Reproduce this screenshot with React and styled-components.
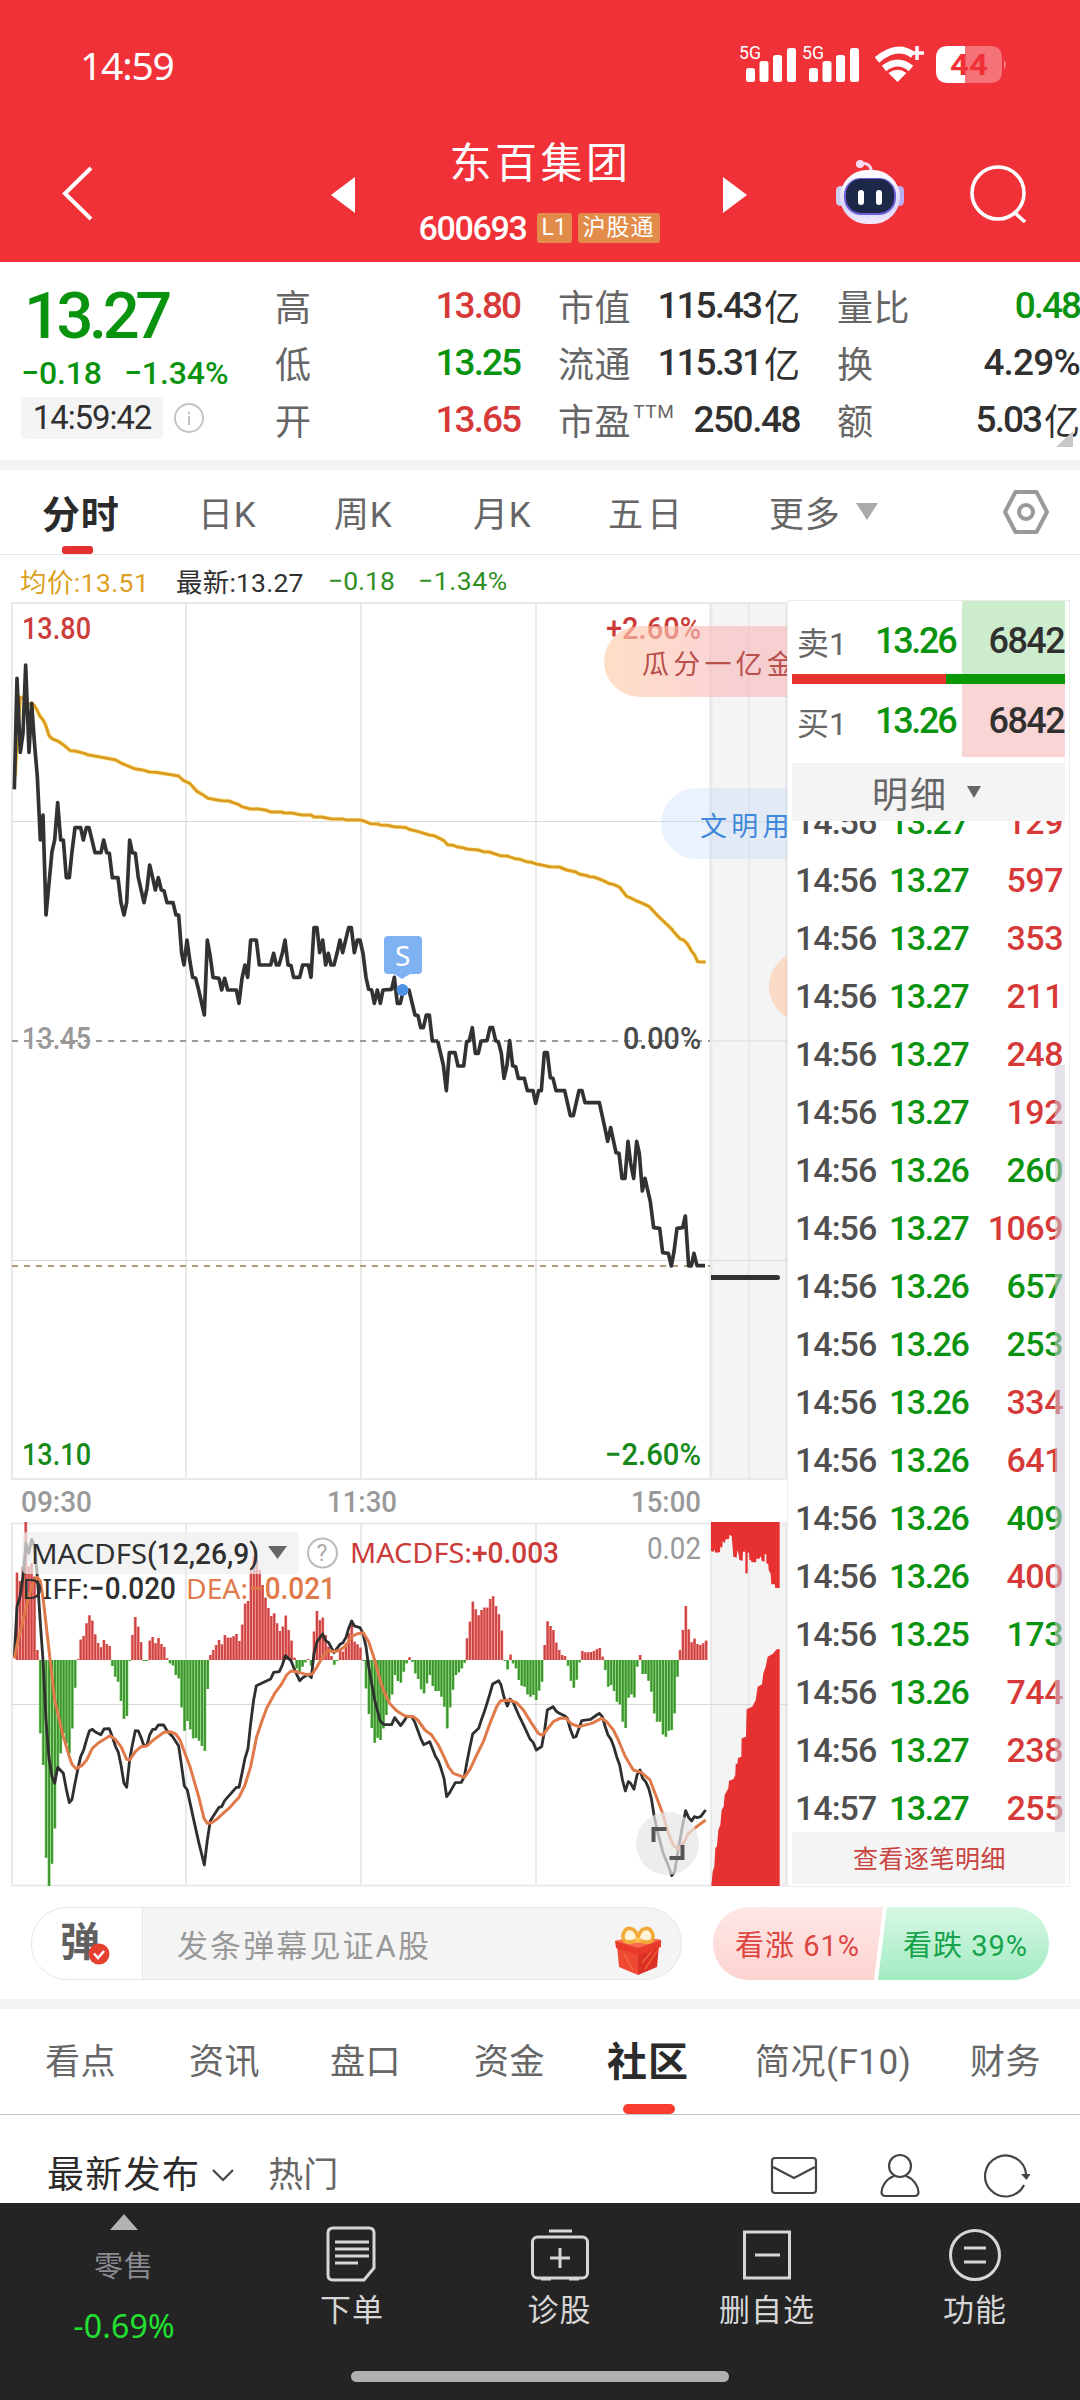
import React from 'react'
import styled, { createGlobalStyle } from 'styled-components'

const RED = '#d63a38'
const GREEN = '#0a930f'
const DARK = '#303030'
const GREY = '#666'

const trades = [
    ['14:56', '13.27', '129', RED],
    ['14:56', '13.27', '597', RED],
    ['14:56', '13.27', '353', RED],
    ['14:56', '13.27', '211', RED],
    ['14:56', '13.27', '248', RED],
    ['14:56', '13.27', '192', RED],
    ['14:56', '13.26', '260', GREEN],
    ['14:56', '13.27', '1069', RED],
    ['14:56', '13.26', '657', GREEN],
    ['14:56', '13.26', '253', GREEN],
    ['14:56', '13.26', '334', RED],
    ['14:56', '13.26', '641', RED],
    ['14:56', '13.26', '409', GREEN],
    ['14:56', '13.26', '400', RED],
    ['14:56', '13.25', '173', GREEN],
    ['14:56', '13.26', '744', RED],
    ['14:56', '13.27', '238', RED],
    ['14:57', '13.27', '255', RED],
]

// chart series are stored at three units per pixel
const priceMorning = '43,598 51,265 61,487 69,430 77,225 87,487 95,340 103,455 112,560 121,750 129,675 138,975 147,880 156,785 164,750 173,638 182,750 190,750 199,863 208,863 216,785 225,713 242,713 250,750 259,713 267,713 276,750 285,788 303,788 311,750 320,788 328,790 337,863 354,863 363,938 372,975 380,938 389,750 397,788 406,790 415,863 432,938 441,895 449,825 458,863 466,900 475,863 484,900 492,902 501,938 519,938 528,975 536,975 545,1090 552,1125 561,1050 570,1115 578,1162 587,1165 596,1200 613,1275 622,1050 631,1100 639,1162 657,1165 665,1200 674,1165 683,1200 709,1200 717,1240 726,1165 735,1125 743,1162 752,1050 769,1050 778,1125 812,1125 821,1090 829,1125 837,1125 847,1090 855,1050 864,1125 873,1127 881,1162 899,1162 908,1125 925,1125 933,1162 942,1013 951,1013 959,1088 968,1050 977,1125 985,1090 993,1125 1002,1125 1011,1090 1020,1050 1028,1088 1037,1050 1046,1013 1054,1013 1063,1088 1072,1050 1080,1050 1089,1090 1098,1162 1106,1198 1115,1200 1123,1240 1132,1200 1141,1240 1149,1200 1175,1198 1183,1162 1192,1240 1201,1240 1210,1200 1227,1200 1245,1275 1254,1277 1262,1313 1270,1313 1279,1275 1288,1275 1297,1353 1314,1353'
const priceAfternoon = '113,123 130,195 139,272 148,158 165,158 174,198 191,198 200,125 208,122 217,83 226,160 235,160 243,123 261,122 270,83 278,83 287,122 295,125 304,160 312,235 321,195 329,122 338,197 347,200 355,235 373,235 382,272 399,272 407,310 416,272 424,272 433,158 442,158 451,233 459,235 468,272 494,272 511,347 520,347 537,272 546,272 555,308 598,308 615,385 623,424 632,383 648,458 657,460 666,535 675,535 684,424 692,490 701,535 710,424 718,460 727,573 735,535 751,605 761,683 779,685 788,758 805,760 814,798 822,755 831,685 848,683 856,648 866,798 874,798 882,760 891,797 915,797'
const avgMorning = '45,560 52,440 61,322 70,325 80,340 90,342 97,341 103,347 112,362 120,379 130,391 138,408 147,437 156,446 175,454 192,466 211,482 225,483 253,490 262,494 345,509 363,519 380,526 403,536 432,541 449,546 468,547 536,558 550,571 569,580 592,605 605,612 624,625 665,632 686,633 715,643 726,650 751,657 777,657 800,661 812,666 845,666 852,669 875,669 905,675 933,675 942,681 965,681 995,687 1030,687 1036,690 1083,690'
const avgAfternoon = '3,690 32,701 55,702 60,705 82,706 105,711 120,711 139,713 147,718 165,722 182,727 208,735 222,737 252,752 262,764 280,766 290,770 308,773 320,777 355,780 370,785 388,786 420,797 442,798 465,806 480,808 500,815 515,817 533,823 570,830 598,831 620,840 645,845 660,853 682,857 688,860 702,861 730,872 748,881 760,883 778,891 800,919 815,925 830,933 848,940 868,950 892,976 935,1017 945,1030 960,1046 972,1051 984,1064 995,1084 1003,1094 1013,1115 1037,1116'
const diffMorning = '43,470 51,320 60,290 69,230 78,130 86,160 95,118 104,140 112,230 121,370 129,480 138,660 147,775 156,830 164,850 173,802 190,820 199,868 208,908 216,898 225,850 234,805 242,770 251,750 260,718 268,693 277,688 285,695 294,700 303,704 312,687 328,686 337,710 346,738 355,757 363,795 372,850 380,862 389,780 397,735 406,692 415,693 423,712 432,738 441,735 449,705 458,688 466,688 475,675 491,675 501,692 518,710 536,738 545,800 553,858 562,870 570,908 579,950 597,1030 613,1095 622,1020 631,962 657,922 665,920 674,902 709,862 717,862 726,820 735,775 744,745 752,670 761,600 769,557 812,537 821,517 838,515 847,495 856,467 873,482 882,505 899,542 908,533 925,523 934,533 942,460 951,425 968,402 977,422 986,428 1002,458 1011,445 1020,433 1029,428 1038,412 1046,385 1055,363 1063,378 1080,383 1089,400 1098,440 1106,500 1124,600 1141,665'
const diffAfternoon = '0,663 12,674 35,674 44,653 62,677 71,665 80,650 95,650 105,668 113,690 122,715 131,734 149,725 157,745 166,768 175,783 183,805 192,835 200,890 209,878 226,848 244,847 253,830 261,785 269,745 278,702 296,685 304,660 313,635 321,610 330,580 338,552 356,542 363,555 373,595 382,618 390,597 400,608 416,645 433,680 450,717 460,728 469,750 485,740 494,690 502,630 519,620 528,633 538,640 555,648 562,655 571,688 580,712 588,710 605,662 632,658 650,645 658,640 667,650 675,678 684,705 693,718 702,742 710,770 719,795 727,838 736,873 745,845 752,850 762,868 771,825 780,810 788,835 797,845 806,865 814,895 822,945 830,985 848,1055 866,1100 875,1127 884,1115 893,1060 908,975 917,932 926,953 935,963 943,950 952,953 962,950 977,930'
const deaMorning = '43,475 52,430 69,362 86,290 100,245 112,232 121,243 130,300 147,450 164,600 190,710 208,770 216,793 228,806 245,797 260,780 277,745 296,728 330,707 346,718 363,740 380,778 389,780 406,755 423,740 441,738 460,720 492,697 510,695 527,702 540,720 570,800 596,890 612,955 622,970 635,968 650,958 675,935 690,922 717,892 735,855 752,800 770,710 785,665 800,625 826,577 843,555 860,525 873,513 890,515 920,524 938,521 951,500 970,467 985,452 1005,455 1020,450 1037,438 1055,410 1070,402 1090,398 1106,425 1124,480 1141,543'
const deaAfternoon = '0,540 12,575 30,612 52,634 75,648 100,650 113,660 135,690 155,705 175,735 192,770 205,800 220,820 253,832 270,808 290,765 310,725 330,670 350,620 362,602 390,601 410,608 430,630 455,670 475,700 487,706 500,690 520,665 540,655 558,655 575,672 597,680 635,670 665,655 680,665 700,690 715,720 735,768 760,810 785,818 810,840 825,880 848,940 865,1000 880,1035 893,1047 910,1030 925,1000 950,980 977,960'

// histogram runs: first x, then the tip of every bar (axis is at 480)
const macdRuns = [
    [51, [218, 243, 200, 66, 200, 190, 230, 450]],
    [121, [700, 795, 1073, 1158, 1091, 985, 800, 760, 700, 730, 760, 685, 563, 477]],
    [242, [419, 408, 370, 346, 362, 403, 429, 442, 420, 432, 438]],
    [337, [498, 530, 545, 603, 657, 648, 483]],
    [397, [405, 351, 380, 426, 483, 483, 422, 411, 430, 414, 432, 441, 475]],
    [510, [490, 496, 525, 535, 622, 692, 663, 688, 715, 714, 722, 738, 752, 567]],
    [631, [465, 450, 435, 420, 433, 405, 413, 413, 409, 402, 423, 374, 311, 303, 215, 167, 180, 210, 255, 293, 324, 348, 340, 370, 393, 380, 347, 390, 422, 473]],
    [890, [505, 515, 500, 487, 477, 497]],
    [942, [395, 333, 361, 353, 405, 440, 468, 494, 483, 450, 455, 430, 400, 375, 425, 433, 443, 483]],
    [1098, [565, 642, 684, 728, 713, 720, 685, 645, 600, 583, 525, 543, 548, 515, 490, 472, 486]],
    [1246, [520, 537, 568, 580, 550, 525, 558, 573, 573, 590, 620, 685, 622, 569, 525, 517, 505, 488]],
    [1401, [415, 365, 305, 328, 346, 330, 323, 323, 297, 289, 318, 343, 392, 483, 508, 464]],
    [1539, [490, 505, 540, 557, 560, 583, 590, 585, 600, 572, 545]],
    [1634, [435, 364, 378, 390, 428, 450, 465, 468]],
    [1704, [497, 542, 563, 539, 487]],
    [1747, [453, 457, 457, 456, 453, 448, 444, 470]],
    [1816, [510, 560, 555, 573, 605, 613, 665, 684, 593, 583, 592, 500, 465]],
    [1928, [522, 522, 542, 575, 640, 665, 665, 703, 710, 692, 690, 640, 530]],
    [2040, [450, 390, 318, 388, 427, 416, 432, 435, 430, 422]],
]
const bars = macdRuns.flatMap(([x, tips]) => tips.map((tip, i) => ({ x: x + i * 8.7, tip })))

const depthTop = '993,66 1199,66 1199,265 1185,263 1185,253 1174,253 1172,222 1166,210 1165,193 1159,190 1159,163 1154,163 1154,185 1145,183 1143,168 1137,178 1130,175 1128,187 1115,187 1112,180 1108,180 1107,158 1103,158 1103,220 1096,220 1096,155 1089,155 1088,182 1078,180 1076,163 1072,150 1070,173 1060,170 1058,145 1055,108 1049,104 1047,117 1037,118 1034,130 1028,122 1027,143 1021,140 1020,157 1006,158 1003,148 1000,156 993,153'
const depthBottom = '994,1158 998,1115 1003,1100 1006,1045 1011,1038 1015,990 1021,975 1025,930 1031,920 1034,885 1045,865 1047,842 1060,838 1066,825 1067,793 1073,790 1074,774 1084,770 1085,715 1098,710 1100,628 1117,620 1127,600 1133,560 1146,553 1150,520 1157,500 1163,470 1178,462 1190,448 1199,447 1199,1158'

export default function App() {
    return (
        <Page>
            <GlobalStyle />
            <Header>
                <StatusBar>
                    <Clock>14:59</Clock>
                    <StatusIcons />
                </StatusBar>
                <TitleBar>
                    <BackIcon />
                    <PrevArrow width="24" height="36" viewBox="0 0 24 36"><path d="M0 18 24 0v36z" fill="#fff" /></PrevArrow>
                    <TitleBlock>
                        <StockName>东百集团</StockName>
                        <CodeRow>
                            <StockCode>600693</StockCode>
                            <Badge width={35}>L1</Badge>
                            <Badge width={82} ls={1}>沪股通</Badge>
                        </CodeRow>
                    </TitleBlock>
                    <NextArrow width="24" height="36" viewBox="0 0 24 36"><path d="M24 18 0 0v36z" fill="#fff" /></NextArrow>
                    <Robot />
                    <SearchIcon />
                </TitleBar>
            </Header>

            <Quote>
                <QuoteMain>
                    <BigPrice>13.27</BigPrice>
                    <ChangeRow><span>−0.18</span><span>−1.34%</span></ChangeRow>
                    <TimeRow>
                        <TimeBox>14:59:42</TimeBox>
                        <svg width="32" height="32" viewBox="0 0 32 32" fill="none" stroke="#c4c4c4" strokeWidth="2">
                            <circle cx="16" cy="16" r="14" /><path d="M16 14v9M16 9.5v2.5" />
                        </svg>
                    </TimeRow>
                </QuoteMain>
                <StatColumn width={245} gap={38}>
                    <Stat><label>高</label><Num color={RED}>13.80</Num></Stat>
                    <Stat><label>低</label><Num color={GREEN}>13.25</Num></Stat>
                    <Stat><label>开</label><Num color={RED}>13.65</Num></Stat>
                </StatColumn>
                <StatColumn width={242} gap={37}>
                    <Stat><label>市值</label><Num>115.43<Unit>亿</Unit></Num></Stat>
                    <Stat><label>流通</label><Num>115.31<Unit>亿</Unit></Num></Stat>
                    <Stat><label>市盈<Sup>TTM</Sup></label><Num ls={-1.5}>250.48</Num></Stat>
                </StatColumn>
                <StatColumn width={243} gap={0}>
                    <Stat><label>量比</label><Num color={GREEN}>0.48</Num></Stat>
                    <Stat><label>换</label><Num ls={-0.8}>4.29%</Num></Stat>
                    <Stat><label>额</label><Num>5.03<Unit>亿</Unit></Num></Stat>
                </StatColumn>
                <Corner />
            </Quote>

            <PeriodTabs>
                <Period active>分时</Period>
                <Period>日K</Period>
                <Period>周K</Period>
                <Period>月K</Period>
                <Period ls={4}>五日</Period>
                <Period>更多<Caret size={11} h={17} color="#aaa" ml={15} /></Period>
                <svg width="46" height="46" viewBox="0 0 46 46" fill="none" stroke="#999" strokeWidth="4" strokeLinejoin="round">
                    <path d="M12.5 3h21L44 23 33.500 43h-21L2 23z" /><circle cx="23" cy="23" r="7" />
                </svg>
            </PeriodTabs>

            <Legend>
                <LegendItem width={156} ls={0.4} color="#dd9f22">均价:13.51</LegendItem>
                <LegendItem width={152} ls={0.2} color={DARK}>最新:13.27</LegendItem>
                <LegendItem width={90} color="#2f8f22">−0.18</LegendItem>
                <LegendItem ls={0.6} color="#2f8f22">−1.34%</LegendItem>
            </Legend>

            <ChartArea>
                <Charts>
                    <PriceChart />
                    <MacdChart />
                    <Barrage top={26} left={604} bg="linear-gradient(90deg, rgba(255,205,170,.65), rgba(248,185,188,.62) 130px)" color="#b9504c" pad={38}>瓜分一亿金</Barrage>
                    <Barrage top={188} left={661} bg="rgba(190,215,250,.32)" color="#4088dc" pad={39}>文明用</Barrage>
                    <Barrage top={351} left={769} bg="rgba(255,198,158,.55)" pad={60} />
                </Charts>
                <Book>
                    <Level bg="#cdebcd" shift={7}><label>卖1</label><b>13.26</b><em>6842</em></Level>
                    <RatioBar><i /></RatioBar>
                    <Level bg="#f9d5d5" shift={0}><label>买1</label><b>13.26</b><em>6842</em></Level>
                    <BookTitle>明细<Caret size={7.500} h={12} color="#666" ml={19} /></BookTitle>
                    <TradeList>
                        <TradeRows>
                            {trades.map(([time, price, vol, color], i) => (
                                <Trade key={i} color={color}><span>{time}</span><b>{price}</b><em>{vol}</em></Trade>
                            ))}
                        </TradeRows>
                        <Thumb />
                    </TradeList>
                    <BookMore>查看逐笔明细</BookMore>
                </Book>
            </ChartArea>

            <CommentBar>
                <CommentInput>
                    <BarrageToggle>
                        弹
                        <Check width="22" height="22" viewBox="0 0 22 22">
                            <circle cx="11" cy="11" r="10.500" fill="#e5402f" />
                            <path d="M6 10.500l4 4.500 6-7" fill="none" stroke="#fff" strokeWidth="2.500" />
                        </Check>
                    </BarrageToggle>
                    <Placeholder>发条弹幕见证A股</Placeholder>
                    <Gift />
                </CommentInput>
                <Votes>
                    <VoteUp>看涨 61%</VoteUp>
                    <VoteDown>看跌 39%</VoteDown>
                </Votes>
            </CommentBar>

            <SectionTabs>
                <Section>看点</Section>
                <Section>资讯</Section>
                <Section>盘口</Section>
                <Section>资金</Section>
                <Section active>社区</Section>
                <Section>简况(F10)</Section>
                <Section>财务</Section>
            </SectionTabs>

            <FeedBar>
                <FeedSort>最新发布</FeedSort>
                <svg width="22" height="13" viewBox="0 0 22 13" fill="none" stroke="#444" strokeWidth="2.200"><path d="M1 1l10 10L21 1" /></svg>
                <FeedHot>热门</FeedHot>
                <FeedIcons>
                    <svg width="46" height="44" viewBox="0 0 46 44"><rect x="1" y="4" width="44" height="35" rx="3" /><path d="M2 13l21 11 21-11" /></svg>
                    <svg width="46" height="44" viewBox="0 0 46 44"><circle cx="23" cy="12" r="11" /><path d="M17 22C9 25 5 32 4.500 38q0 4 4 4h29q4 0 4-4C41 32 37 25 29 22" /></svg>
                    <svg width="46" height="44" viewBox="0 0 46 44"><path d="M41 31A20.500 20.500 0 1 1 43 20" /><path d="M38 20h9.500l-4 6z" fill="#444" stroke="none" /></svg>
                </FeedIcons>
            </FeedBar>

            <BottomNav>
                <IndexCell>
                    <svg width="28" height="16" viewBox="0 0 28 16"><path d="M14 0 28 16H0z" fill="#b3b3b3" /></svg>
                    <IndexName>零售</IndexName>
                    <IndexChange>-0.69%</IndexChange>
                </IndexCell>
                <NavItem>
                    <svg width="60" height="58" viewBox="0 0 60 58"><path d="M11 3h36q5 0 5 5v35L42 55H11q-5 0-5-5V8q0-5 5-5zM13 17h34M13 24h34M13 31h34M13 38h23" /></svg>
                    下单
                </NavItem>
                <NavItem>
                    <svg width="60" height="58" viewBox="0 0 60 58"><rect x="2.500" y="12" width="55" height="41" rx="5" /><path d="M19 6h23M30 23v20M20 33h20M11 54h10M39 54h10" /></svg>
                    诊股
                </NavItem>
                <NavItem>
                    <svg width="60" height="58" viewBox="0 0 60 58"><path d="M7.500 7h45v46h-45zM18 30h25" /></svg>
                    删自选
                </NavItem>
                <NavItem>
                    <svg width="60" height="58" viewBox="0 0 60 58"><circle cx="30" cy="30" r="24.500" /><path d="M19 23h22M19 37h22" /></svg>
                    功能
                </NavItem>
                <HomeBar />
            </BottomNav>
        </Page>
    )
}

function StatusIcons() {
    let signal = [[0, 20], [13.5, 13], [27, 7], [41, 0]]
    return (
        <svg width="272" height="44" viewBox="0 0 272 44" fill="#fff">
            <Label x="0" y="16" size={18} fill="#fff" textLength="22">5G</Label>
            <Label x="63" y="16" size={18} fill="#fff" textLength="22">5G</Label>
            {[7, 70].map(left => signal.map(([x, y]) => (
                <rect key={left + x} x={left + x} y={5 + y} width="9" height={34 - y} rx="2.500" />
            )))}
            <g fill="none" stroke="#fff" strokeWidth="7">
                <path d="M138 17Q158 0 174 12" />
                <path d="M145 25.500q14-11 27 0" />
            </g>
            <path d="M158.500 39l-9-9q9-6.500 18 0z" />
            <path d="M171 10h14M178 3v14" stroke="#fff" strokeWidth="3.500" />
            <path d="M226 3h-17q-12 0-12 12v13q0 12 12 12h17z" />
            <path d="M226 3h25q12 0 12 12v13q0 12-12 12h-25z" opacity=".32" />
            <path d="M265 17q4 4 0 9z" opacity=".4" />
            <Label x="211" y="32" size={30} weight={700} fill="#f03038" textLength="38">44</Label>
        </svg>
    )
}

function BackIcon() {
    return (
        <svg width="32" height="58" viewBox="0 0 32 58" fill="none" stroke="#fff" strokeWidth="4"><path d="M29 3 3 28.500 29 54" /></svg>
    )
}

function SearchIcon() {
    return (
        <svg width="60" height="60" viewBox="0 0 60 60" fill="none" stroke="#fff" strokeWidth="3.600"><circle cx="29" cy="29" r="26" /><path d="M46 49l10 9" /></svg>
    )
}

function Robot() {
    return (
        <RobotSvg width="70" height="68" viewBox="0 0 70 68">
            <defs>
                <linearGradient id="head" x1="0" y1="0" x2="0" y2="1">
                    <stop offset="0" stopColor="#fff" /><stop offset=".7" stopColor="#d9d6f8" /><stop offset="1" stopColor="#f3eafb" />
                </linearGradient>
            </defs>
            <path d="M36 14q1-8-9-9" fill="none" stroke="#f3d9ee" strokeWidth="3" />
            <circle cx="25" cy="6" r="4" fill="#f6dcee" />
            <rect x="1" y="28" width="9" height="20" rx="4.500" fill="#cdd0f3" />
            <rect x="60" y="28" width="9" height="20" rx="4.500" fill="#b8aef2" />
            <rect x="5" y="12" width="60" height="54" rx="27" fill="url(#head)" />
            <rect x="9" y="20" width="52" height="37" rx="17" fill="#6c5cd8" />
            <rect x="11" y="21" width="48" height="34" rx="15" fill="#1c2848" />
            <rect x="23" y="32" width="6" height="15" rx="3" fill="#fff" />
            <rect x="41" y="32" width="6" height="15" rx="3" fill="#fff" />
        </RobotSvg>
    )
}

function PriceChart() {
    return (
        <svg width="787" height="923" viewBox="0 600 787 923">
            <rect x="709" y="602" width="78" height="877" fill="#f4f4f4" />
            <g stroke="#e9e9e9" strokeWidth="2">
                <path d="M11 603h776M12 603v876M186 603v876M361 603v876M536 603v876M749 603v876M786 603v876M11 1479h776" />
                <path d="M711 603v876" strokeWidth="3" />
                <path d="M12 821.500h775M12 1260.500h775M711 1041h76" strokeWidth="1" stroke="#dadada" />
            </g>
            <path d="M12 1041h698" stroke="#999" strokeWidth="2" strokeDasharray="6 6" />
            <path d="M12 1266h698" stroke="#b09c78" strokeWidth="2" strokeDasharray="6 6" />
            <Label x="22" y="639" size={31} weight={500} fill="#cb3c3a" textLength="69">13.80</Label>
            <Label x="22" y="1049" size={31} weight={500} fill="#999" textLength="69">13.45</Label>
            <Label x="22" y="1465" size={31} weight={500} fill="#17891a" textLength="69">13.10</Label>
            <Label x="606" y="639" size={31} weight={500} fill="#cb3c3a" textLength="95">+2.60%</Label>
            <Label x="623" y="1049" size={31} weight={500} fill="#4a4a4a" textLength="78">0.00%</Label>
            <Label x="605" y="1465" size={31} weight={500} fill="#17891a" textLength="96">−2.60%</Label>
            <g transform="translate(0 590) scale(.33333)" fill="none" strokeLinejoin="round">
                <g stroke="#fff3b8" strokeWidth="14">
                    <polyline points={avgMorning} />
                    <polyline points={avgAfternoon} transform="translate(1080 0)" />
                </g>
                <g stroke="#dc9c22" strokeWidth="9">
                    <polyline points={avgMorning} />
                    <polyline points={avgAfternoon} transform="translate(1080 0)" />
                </g>
                <g stroke="#323232" strokeWidth="11">
                    <polyline points={priceMorning} />
                    <polyline points={priceAfternoon} transform="translate(1200 1230)" />
                </g>
            </g>
            <path d="M711 1278h66q3 0 3-2.500t-3-2.500h-66z" transform="translate(0 2)" fill="#323232" />
            <circle cx="402.500" cy="990" r="6" fill="#4e92e6" />
            <path d="M388 936h30q4 0 4 4v30q0 4-4 4h-8l-8 5-8-5h-6q-4 0-4-4v-30q0-4 4-4z" fill="#7fb2f2" />
            <Label x="395" y="966" size={28} fill="#fff" family="Noto Sans">S</Label>
            <Label x="21" y="1512" size={30} weight={500} fill="#999" textLength="71">09:30</Label>
            <Label x="327" y="1512" size={30} weight={500} fill="#999" textLength="70">11:30</Label>
            <Label x="631" y="1512" size={30} weight={500} fill="#999" textLength="70">15:00</Label>
        </svg>
    )
}

function MacdChart() {
    return (
        <svg width="787" height="364" viewBox="0 1523 787 364">
            <rect x="710" y="1523" width="77" height="363" fill="#f4f4f4" />
            <g stroke="#e9e9e9" strokeWidth="2">
                <path d="M11 1523.500h776M12 1523v363M186 1523v363M361 1523v363M536 1523v363M711 1523v363M749 1523v363M786 1523v363M11 1885.500h776" />
                <path d="M12 1704.500h775" strokeWidth="1" stroke="#dadada" />
            </g>
            <g transform="translate(0 1500) scale(.33333)">
                {bars.map(({ x, tip }, i) => (
                    <g key={i} fill={tip < 480 ? '#f58a88' : '#7fcf6c'}>
                        <rect x={x - 4.5} y={Math.min(tip, 480)} width="9" height={Math.abs(tip - 480)} />
                        <rect x={x - 2.5} y={Math.min(tip, 480)} width="5.500" height={Math.abs(tip - 480)} fill={tip < 480 ? '#c94442' : '#3d9230'} />
                    </g>
                ))}
                <g transform="translate(1140 0)" fill="#e73030">
                    <polygon points={depthTop} />
                    <polygon points={depthBottom} />
                </g>
                <g fill="none" stroke="#2f2f2f" strokeWidth="8.500" strokeLinejoin="round">
                    <polyline points={diffMorning} />
                    <polyline points={diffAfternoon} transform="translate(1140 0)" />
                </g>
                <g fill="none" stroke="#e07a4a" strokeWidth="9" strokeLinejoin="round">
                    <polyline points={deaMorning} />
                    <polyline points={deaAfternoon} transform="translate(1140 0)" />
                </g>
            </g>
            <rect x="22" y="1532" width="277" height="42" rx="5" fill="#eee" opacity=".7" />
            <Label x="31" y="1564" size={28} fill={DARK} family="Noto Sans" textLength="116">MACDFS</Label>
            <Label x="147" y="1564" size={29} weight={500} fill={DARK} textLength="112">(12,26,9)</Label>
            <path d="M268 1546h19l-9.500 13z" fill="#666" />
            <circle cx="322.500" cy="1553" r="14.500" fill="none" stroke="#bbb" strokeWidth="2" />
            <Label x="316.500" y="1561" size={23} fill="#aaa">?</Label>
            <Label x="350" y="1563" size={28} fill="#cb3c3a" family="Noto Sans" textLength="122">MACDFS:</Label>
            <Label x="472" y="1563" size={30} weight={500} fill="#cb3c3a" textLength="87">+0.003</Label>
            <Label x="647" y="1559" size={31} fill="#999" textLength="54">0.02</Label>
            <Label x="22" y="1599" size={28} fill={DARK} family="Noto Sans" textLength="67">DIFF:</Label>
            <Label x="89" y="1599" size={31} weight={500} fill={DARK} textLength="87">−0.020</Label>
            <Label x="186" y="1599" size={28} fill="#e07a4a" family="Noto Sans" textLength="62">DEA:</Label>
            <Label x="249" y="1599" size={31} weight={500} fill="#e07a4a" textLength="87">−0.021</Label>
            <circle cx="667.500" cy="1843.500" r="31.500" fill="#e6e6e6" opacity=".72" />
            <path d="M653.500 1842v-13h13M682.500 1845v13h-13" fill="none" stroke="#555" strokeWidth="4" />
        </svg>
    )
}

function Gift() {
    return (
        <GiftSvg width="48" height="50" viewBox="0 0 48 50">
            <path d="M3 19 24 28V49L5 41z" fill="#ee4a34" />
            <path d="M24 28 45 19 43 41 24 49z" fill="#dd3127" />
            <path d="M10 28l9 16M43 25 31 43M38 25 28 37" stroke="#f9803f" strokeWidth="1.500" opacity=".6" />
            <path d="M1 15 24 10 47 14V21L24 29 2 22z" fill="#e93a2c" />
            <path d="M1 15 24 10 47 14 24 22z" fill="#fb6a50" />
            <g fill="#fff3d8" stroke="#f2ab38" strokeWidth="3.600">
                <path d="M24 14Q8 20 9 9 12-1 20 4q4 4 4 10z" />
                <path d="M24 14Q40 20 39 9 36-1 28 4q-4 4-4 10z" />
            </g>
            <circle cx="24" cy="14" r="3" fill="#ffc250" />
        </GiftSvg>
    )
}

const GlobalStyle = createGlobalStyle`
    body {
        margin: 0;
        background: #fff;
        font-family: Roboto, "Noto Sans CJK SC", sans-serif;
    }
    * {
        box-sizing: border-box;
    }
    svg {
        display: block;
        flex: none;
        overflow: visible;
    }
`
const Page = styled.div`
    width: 1080px;
    height: 2400px;
    overflow: hidden;
    display: flex;
    flex-direction: column;
    background: #fff;
    white-space: nowrap;
    & > * {
        flex: none;
    }
`
const Label = styled.text.attrs({ lengthAdjust: 'spacingAndGlyphs' })`
    font-family: ${props => props.family ? `"${props.family}", sans-serif` : 'Roboto, sans-serif'};
    font-size: ${props => props.size + "px"};
    font-weight: ${props => props.weight || 400};
`
const Header = styled.div`
    height: 262px;
    background: #f13138;
    color: #fff;
`
const StatusBar = styled.div`
    display: flex;
    justify-content: space-between;
    align-items: center;
    height: 130px;
    padding: 0 69px 0 80px;
`
const Clock = styled.div`
    font-family: "Noto Sans", sans-serif;
    font-size: 39px;
    line-height: 50px;
    letter-spacing: -1.2px;
    padding-bottom: 1px;
`
const TitleBar = styled.div`
    display: flex;
    height: 127px;
    padding: 35px 0 0 62px;
`
const PrevArrow = styled.svg`
    margin: 12px 0 0 237px;
`
const NextArrow = styled.svg`
    margin: 12px 0 0 0;
`
const RobotSvg = styled.svg`
    margin: -7px 0 0 88px;
    & + svg {
        margin: -1px 0 0 64px;
    }
`
const TitleBlock = styled.div`
    width: 368px;
    margin-top: -32px;
    display: flex;
    flex-direction: column;
    align-items: center;
`
const StockName = styled.div`
    font-size: 42px;
    line-height: 62px;
    letter-spacing: 3.5px;
    padding-left: 3px;
`
const CodeRow = styled.div`
    display: flex;
    align-items: center;
    height: 40px;
    margin-top: 13px;
`
const StockCode = styled.div`
    font-size: 34px;
    font-weight: 500;
    letter-spacing: -1.3px;
    margin-right: 10px;
`
const Badge = styled.div`
    width: ${props => props.width + "px"};
    height: 30px;
    line-height: 30px;
    margin-right: 6px;
    border-radius: 3px;
    background: #e28c49;
    text-align: center;
    font-size: 23px;
    letter-spacing: ${props => (props.ls || 0) + "px"};
    &:last-child {
        margin-right: 0;
    }
`
const Quote = styled.div`
    position: relative;
    display: flex;
    height: 208px;
    border-bottom: 10px solid #f4f4f4;
`
const QuoteMain = styled.div`
    width: 275px;
    padding: 20px 0 0 21px;
    color: ${GREEN};
`
const BigPrice = styled.div`
    font-size: 65px;
    font-weight: 500;
    line-height: 68px;
    letter-spacing: -4.4px;
    padding-left: 3px;
`
const ChangeRow = styled.div`
    display: flex;
    gap: 22px;
    font-size: 32px;
    font-weight: 500;
    line-height: 46px;
    letter-spacing: -0.1px;
`
const TimeRow = styled.div`
    display: flex;
    align-items: center;
    gap: 10px;
    margin-top: 1px;
`
const TimeBox = styled.div`
    width: 142px;
    height: 42px;
    line-height: 42px;
    background: #f4f4f4;
    border-radius: 5px;
    text-align: center;
    font-size: 33px;
    letter-spacing: -1.1px;
    color: ${DARK};
`
const StatColumn = styled.div`
    width: ${props => props.width + "px"};
    margin-right: ${props => props.gap + "px"};
    padding-top: 14px;
`
const Stat = styled.div`
    display: flex;
    justify-content: space-between;
    align-items: center;
    height: 57px;
    label {
        display: flex;
        font-size: 36px;
        letter-spacing: 0.6px;
        color: ${GREY};
    }
`
const Num = styled.div`
    display: flex;
    align-items: center;
    font-size: 37px;
    font-weight: 500;
    letter-spacing: ${props => (props.ls || -2) + "px"};
    margin-right: 0;
    padding-top: 1px;
    color: ${props => props.color || DARK};
`
const Unit = styled.span`
    font-size: 36px;
    font-weight: 400;
    letter-spacing: 0;
    margin-left: 3px;
`
const Sup = styled.span`
    font-size: 19px;
    line-height: 38px;
    margin-left: 2px;
`
const Corner = styled.div`
    position: absolute;
    right: 7px;
    bottom: 13px;
    border-left: 17px solid transparent;
    border-bottom: 16px solid #c8c8c8;
`
const PeriodTabs = styled.div`
    display: grid;
    grid-template-columns: 156px 136px 139px 135px 161px 234px auto;
    align-items: center;
    height: 85px;
    padding-left: 42px;
    border-bottom: 1px solid #e6e6e6;
`
const Period = styled.div`
    position: relative;
    display: flex;
    align-items: center;
    height: 84px;
    padding-bottom: 2px;
    font-size: ${props => props.active ? "38px" : "35px"};
    font-weight: ${props => props.active ? 700 : 400};
    color: ${props => props.active ? '#2b2b2b' : GREY};
    letter-spacing: ${props => (props.ls || 0.8) + "px"};

    &::after {
        content: "";
        display: ${props => props.active ? "block" : "none"};
        position: absolute;
        left: 20px;
        bottom: 0;
        width: 31px;
        height: 8px;
        border-radius: 3px;
        background: #e53230;
    }
`
const Caret = styled.i`
    margin-left: ${props => props.ml + "px"};
    border: ${props => props.size + "px"} solid transparent;
    border-top: ${props => props.h + "px"} solid ${props => props.color};
    border-bottom: 0;
`
const Legend = styled.div`
    display: flex;
    align-items: center;
    height: 46px;
    padding: 4px 0 0 20px;
`
const LegendItem = styled.div`
    width: ${props => props.width ? props.width + "px" : "auto"};
    font-size: 26.5px;
    letter-spacing: ${props => (props.ls || 0) + "px"};
    color: ${props => props.color};
`
const ChartArea = styled.div`
    display: flex;
    height: 1287px;
    margin-top: -1px;
`
const Charts = styled.div`
    position: relative;
    width: 787px;
    overflow: hidden;
`
const Barrage = styled.div`
    position: absolute;
    top: ${props => props.top + "px"};
    left: ${props => props.left + "px"};
    height: 71px;
    line-height: 79px;
    padding-left: ${props => props.pad + "px"};
    border-radius: 36px 0 0 36px;
    background: ${props => props.bg};
    color: ${props => props.color};
    font-size: 27px;
    letter-spacing: 4.2px;
    width: 300px;
`
const Book = styled.div`
    width: 283px;
    border: 1px solid #ececec;
    padding: 0 4px;
`
const Level = styled.div`
    display: flex;
    align-items: center;
    height: 73px;
    padding-top: ${props => props.shift + "px"};
    background: linear-gradient(90deg, transparent 170px, ${props => props.bg} 170px);
    label {
        width: 83px;
        padding-left: 5px;
        font-size: 32px;
        color: ${GREY};
    }
    b {
        width: 87px;
        font-size: 36px;
        font-weight: 500;
        letter-spacing: -2.3px;
        color: ${GREEN};
    }
    em {
        flex: 1;
        text-align: right;
        font-style: normal;
        font-size: 36px;
        font-weight: 500;
        letter-spacing: -1.6px;
        padding-right: 1px;
        color: ${DARK};
    }
`
const RatioBar = styled.div`
    height: 10px;
    background: #089808;
    i {
        display: block;
        width: 154px;
        height: 10px;
        background: #e73230;
    }
`
const BookTitle = styled.div`
    display: flex;
    align-items: center;
    height: 58px;
    margin-top: 6px;
    padding-left: 80px;
    background: #f4f4f4;
    font-size: 36px;
    letter-spacing: 2px;
    color: ${GREY};
`
const TradeList = styled.div`
    position: relative;
    height: 1011px;
    overflow: hidden;
`
const TradeRows = styled.div`
    margin-top: -28px;
`
const Trade = styled.div`
    display: flex;
    align-items: center;
    height: 58px;
    padding-right: 2px;
    font-size: 34px;
    font-weight: 500;
    letter-spacing: -1.5px;
    span {
        width: 97px;
        padding-left: 3px;
        letter-spacing: -1px;
        color: #505050;
    }
    b {
        font-weight: 500;
        color: ${GREEN};
    }
    em {
        flex: 1;
        text-align: right;
        font-style: normal;
        letter-spacing: -0.5px;
        color: ${props => props.color};
    }
`
const Thumb = styled.div`
    position: absolute;
    top: 244px;
    right: 0;
    bottom: 0;
    width: 10px;
    background: rgba(205, 203, 213, 0.55);
`
const BookMore = styled.div`
    height: 52px;
    line-height: 56px;
    background: #f4f4f4;
    text-align: center;
    font-size: 25px;
    letter-spacing: 0.5px;
    padding-left: 2px;
    color: #c94442;
`
const CommentBar = styled.div`
    display: flex;
    height: 122px;
    padding: 20px 31px 0 31px;
    border-bottom: 10px solid #f4f4f4;
`
const CommentInput = styled.div`
    display: flex;
    align-items: center;
    width: 651px;
    height: 73px;
    border: 1px solid #e6e6e6;
    border-radius: 36px;
    background: #f4f4f4;
    overflow: hidden;
    padding-right: 19px;
`
const BarrageToggle = styled.div`
    position: relative;
    width: 111px;
    height: 71px;
    line-height: 69px;
    padding-left: 28px;
    background: #fff;
    border-right: 1px solid #e6e6e6;
    font-size: 40px;
    font-weight: 700;
    color: #606060;
`
const Check = styled.svg`
    position: absolute;
    left: 56px;
    top: 35px;
`
const Placeholder = styled.div`
    flex: 1;
    padding-left: 34px;
    font-size: 31px;
    letter-spacing: 2.1px;
    color: #999;
`
const GiftSvg = styled.svg`
    margin-top: 14px;
`
const Votes = styled.div`
    display: flex;
    margin-left: 31px;
    width: 336px;
    height: 73px;
    line-height: 78px;
    font-size: 29px;
    letter-spacing: 1px;
`
const VoteUp = styled.div`
    width: 170px;
    padding-left: 22px;
    border-radius: 36px 0 0 36px;
    background: linear-gradient(#fee8e7, #fdd3cf);
    clip-path: polygon(0 0, 100% 0, 161px 100%, 0 100%);
    color: #dc4540;
`
const VoteDown = styled.div`
    width: 171px;
    margin-left: -5px;
    padding-left: 25px;
    border-radius: 0 36px 36px 0;
    background: linear-gradient(#d8f8e6, #a2ebc1);
    clip-path: polygon(9px 0, 100% 0, 100% 100%, 0 100%);
    color: #16a34c;
`
const SectionTabs = styled.div`
    display: grid;
    grid-template-columns: 144px 141px 144px 133px 148px 215px auto;
    height: 106px;
    padding-left: 45px;
    border-bottom: 1px solid #c4c4c4;
`
const Section = styled.div`
    position: relative;
    height: 105px;
    line-height: 108px;
    font-size: ${props => props.active ? "40px" : "35px"};
    font-weight: ${props => props.active ? 700 : 400};
    color: ${props => props.active ? '#2b2b2b' : GREY};
    letter-spacing: ${props => props.active ? "1px" : "0.5px"};

    &::after {
        content: "";
        display: ${props => props.active ? "block" : "none"};
        position: absolute;
        left: 16px;
        bottom: 0;
        width: 52px;
        height: 10px;
        border-radius: 5px;
        background: #f93c30;
    }
`
const FeedBar = styled.div`
    display: flex;
    align-items: center;
    height: 88px;
    padding: 33px 51px 0 47px;
`
const FeedSort = styled.div`
    font-size: 37px;
    letter-spacing: 1.3px;
    line-height: 50px;
    margin-right: 12px;
    padding-top: 1px;
    color: #2b2b2b;
`
const FeedHot = styled.div`
    flex: 1;
    margin-left: 34px;
    padding-top: 1px;
    line-height: 50px;
    font-size: 35px;
    color: ${GREY};
`
const FeedIcons = styled.div`
    display: flex;
    gap: 60px;
    svg {
        fill: none;
        stroke: #444;
        stroke-width: 2.2;
    }
`
const BottomNav = styled.div`
    position: relative;
    display: grid;
    grid-template-columns: 248px 208px 207px 208px 208px;
    height: 197px;
    background: #242424;
`
const IndexCell = styled.div`
    display: flex;
    flex-direction: column;
    align-items: center;
    padding-top: 11px;
`
const IndexName = styled.div`
    margin-top: 13px;
    line-height: 48px;
    font-size: 29px;
    letter-spacing: 1px;
    color: #8b8b92;
`
const IndexChange = styled.div`
    margin-top: 10px;
    line-height: 50px;
    font-family: "Noto Sans", sans-serif;
    font-size: 32px;
    letter-spacing: 0.2px;
    color: #22e030;
`
const NavItem = styled.div`
    display: flex;
    flex-direction: column;
    align-items: center;
    padding-top: 22px;
    line-height: 56px;
    font-size: 31px;
    letter-spacing: 1px;
    color: #d6d6d6;
    svg {
        fill: none;
        stroke: #d6d6d6;
        stroke-width: 3;
    }
`
const HomeBar = styled.div`
    position: absolute;
    left: 351px;
    bottom: 18px;
    width: 378px;
    height: 11px;
    border-radius: 6px;
    background: #b0b0b0;
`
